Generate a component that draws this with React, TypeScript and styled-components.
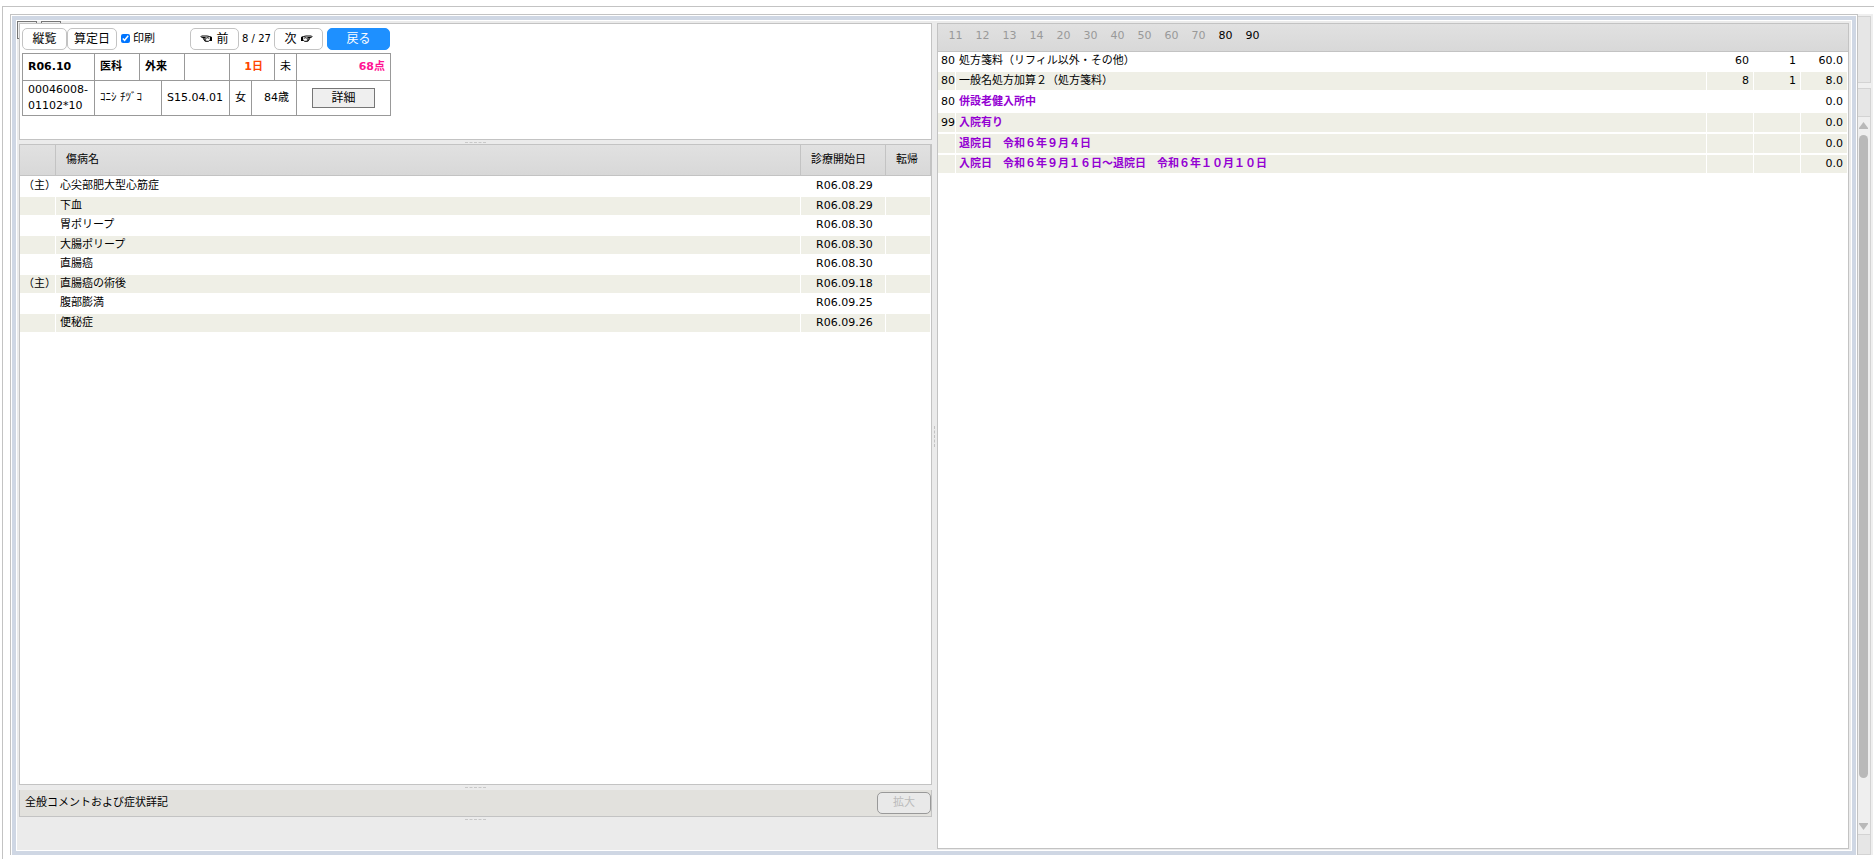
import React from 'react';
import styled, { createGlobalStyle } from 'styled-components';

const Global = createGlobalStyle`
  *, *::before, *::after { box-sizing: border-box; }
  html, body, #root { height: 100%; }
  body {
    margin: 0;
    background: #fff;
    color: #000;
    font: 11px/16px "DejaVu Sans", "Noto Sans CJK JP", sans-serif;
  }
  button, input { font: inherit; color: inherit; margin: 0; }
  table { border-collapse: separate; border-spacing: 0; }
`;

const line = '#c3c3c3';
const stripe = '#efefe6';
const barFill = 'linear-gradient(#e1e1e1, #d8d8d8)';

const Page = styled.div`
  height: 100%;
  padding-top: 6px;
  padding-left: 2px;
`;

const Frame = styled.div`
  display: flex;
  height: 100%;
  padding: 7px 1px 4px 7px;
  border-top: 1px solid ${line};
  border-left: 1px solid ${line};
`;

const Dialog = styled.main`
  flex: 1;
  min-width: 0;
  display: flex;
  padding: 1px 1px 0 1px;
  border: 1px solid ${line};
  border-bottom: 0;
`;

const DialogBody = styled.div`
  position: relative;
  flex: 1;
  min-width: 0;
  display: flex;
  padding: 3px 3px 2px;
  border: 4px solid #cfd7e4;
  background: #ebebeb;
  box-shadow: inset 0 0 0 1px #fff;
`;

/* Edges of the tabs that peek out from behind the patient panel */
const BackTabs = styled.div`
  position: absolute;
  top: 1px;
  left: 1px;
  display: flex;
  gap: 4px;
`;

const BackTab = styled.span`
  width: 20px;
  height: 18px;
  border: 1px solid #767676;
  background: #efefef;
`;

const Left = styled.div`
  flex: 913 1 0;
  min-width: 0;
  display: flex;
  flex-direction: column;
  position: relative;
`;

const Panel = styled.section`
  background: #fff;
  border: 1px solid ${line};
`;

const TopPanel = styled(Panel)`
  flex: none;
  height: 117px;
  padding: 2px;
`;

const Grip = styled.div<{ $h: number }>`
  flex: none;
  height: ${p => p.$h}px;
  display: flex;
  justify-content: center;
  align-items: center;
  &::before {
    content: '';
    width: 21px;
    border-top: 1px dashed #c8c8c8;
  }
`;

const Splitter = styled.div`
  flex: none;
  width: 5px;
  display: flex;
  align-items: center;
  justify-content: center;
  &::before {
    content: '';
    height: 21px;
    border-left: 1px dashed #c3c3c3;
  }
`;

const Toolbar = styled.div`
  display: flex;
  align-items: center;
  height: 25px;
`;

const ToolButton = styled.button<{ $w: number }>`
  display: flex;
  align-items: center;
  justify-content: center;
  gap: 4px;
  width: ${p => p.$w}px;
  height: 22px;
  padding: 0;
  border: 1px solid ${line};
  border-radius: 5px;
  background: #fff;
  font-size: 12px;
  line-height: 18px;
`;

const BackButton = styled(ToolButton)`
  margin-left: 4px;
  border-color: #1e90ff;
  background: #1e90ff;
  color: #fff;
`;

const PrintLabel = styled.label`
  display: flex;
  align-items: center;
  gap: 3px;
  width: 73px;
  padding-left: 4px;
  input { width: 9px; height: 9px; }
`;

const Pager = styled.span`
  width: 35px;
  text-align: center;
  font-size: 10px;
`;

const Summary = styled.table`
  width: 369px;
  margin-top: 2px;
  table-layout: fixed;
  border-collapse: collapse;
`;

const SumCell = styled.td<{ $h?: number; $right?: number; $color?: string; $bold?: boolean }>`
  height: ${p => (p.$h ? p.$h + 'px' : 'auto')};
  padding: 0 ${p => p.$right ?? 0}px 0 5px;
  border: 1px solid #999;
  white-space: nowrap;
  text-align: ${p => (p.$right ? 'right' : 'left')};
  color: ${p => p.$color || '#000'};
  font-weight: ${p => (p.$bold ? 700 : 400)};
`;

const ButtonCell = styled(SumCell)`
  padding: 0;
  text-align: center;
`;

const DetailButton = styled.button`
  width: 63px;
  height: 20px;
  padding: 0;
  border: 1px solid #767676;
  background: #efefef;
  font-size: 12px;
  line-height: 18px;
  vertical-align: middle;
`;

const ListPanel = styled(Panel)`
  flex: 1;
  min-height: 0;
`;

const DataTable = styled.table`
  width: 100%;
  table-layout: fixed;
`;

const HeadCell = styled.th`
  height: 31px;
  padding: 0 0 0 10px;
  text-align: left;
  font-weight: 400;
  white-space: nowrap;
  background: ${barFill};
  border-right: 1px solid ${line};
  border-bottom: 1px solid ${line};
`;

const Cell = styled.td<{ $left?: number; $end?: boolean }>`
  padding: 0 4px 0 ${p => p.$left ?? 0}px;
  text-align: ${p => (p.$end ? 'right' : 'left')};
  white-space: nowrap;
  border-right: 1px solid #fff;
`;

const DiseaseRow = styled.tr<{ $even: boolean }>`
  height: ${p => (p.$even ? 18 : 21)}px;
  background: ${p => (p.$even ? stripe : '#fff')};
  ${Cell} { padding-bottom: ${p => (p.$even ? 0 : 1)}px; }
`;

const CommentBar = styled.section`
  flex: none;
  display: flex;
  align-items: center;
  justify-content: space-between;
  height: 27px;
  padding-left: 5px;
  background: #e2e1dd;
  border: 1px solid ${line};
  border-top: 0;
`;

const ExpandButton = styled.button`
  width: 54px;
  height: 22px;
  padding: 0;
  border: 1px solid #999;
  border-radius: 5px;
  background: #e9e9e9;
  &:disabled { color: #bbb; }
`;

const BottomSpace = styled.div`
  flex: none;
  height: 28px;
`;

const Right = styled(Panel)`
  flex: 910 1 0;
  min-width: 0;
`;

const CodeBar = styled.nav`
  display: flex;
  height: 28px;
  padding: 4px 0 0 4px;
  background: ${barFill};
  border-bottom: 1px solid ${line};
`;

const CodeLink = styled.a<{ $on: boolean }>`
  width: 27px;
  text-align: center;
  text-decoration: none;
  color: ${p => (p.$on ? '#000' : '#999')};
`;

const ActRow = styled.tr<{ $h: number; $fill: boolean }>`
  height: ${p => p.$h}px;
  ${Cell} {
    background: ${p => (p.$fill ? stripe : '#fff')};
    border-bottom: 2px solid #fff;
  }
`;

const ActName = styled(Cell)<{ $note: boolean }>`
  color: ${p => (p.$note ? '#9400d3' : '#000')};
  font-weight: ${p => (p.$note ? 700 : 400)};
`;

const BackStrip = styled.aside`
  flex: none;
  width: 15px;
  display: flex;
  flex-direction: column;
  padding: 2px 2px 0 0;
  background: #efefef;
`;

const StripBox = styled.div<{ $h: number }>`
  flex: none;
  height: ${p => p.$h}px;
  border: 1px solid #d3d3d3;
  border-left: 0;
  background: #e6e6e6;
`;

const StripGap = styled.div`
  flex: none;
  height: 5px;
`;

const Scroll = styled.div`
  flex: 1;
  display: flex;
  flex-direction: column;
  align-items: center;
  padding: 5px 1px 4px 0;
  border-right: 1px solid #d3d3d3;
  svg { flex: none; display: block; }
`;

const Thumb = styled.div`
  flex: 643;
  width: 9px;
  margin-top: 6px;
  border-radius: 5px;
  background: #b9b9b9;
`;

const ThumbRest = styled.div`
  flex: 45;
`;

const diseases = [
  ['（主）', '心尖部肥大型心筋症', 'R06.08.29'],
  ['', '下血', 'R06.08.29'],
  ['', '胃ポリープ', 'R06.08.30'],
  ['', '大腸ポリープ', 'R06.08.30'],
  ['', '直腸癌', 'R06.08.30'],
  ['（主）', '直腸癌の術後', 'R06.09.18'],
  ['', '腹部膨満', 'R06.09.25'],
  ['', '便秘症', 'R06.09.26'],
];

const codes = ['11', '12', '13', '14', '20', '30', '40', '50', '60', '70', '80', '90'];

const acts = [
  { code: '80', name: '処方箋料（リフィル以外・その他）', pt: '60', n: '1', sum: '60.0', h: 20, fill: false, note: false },
  { code: '80', name: '一般名処方加算２（処方箋料）', pt: '8', n: '1', sum: '8.0', h: 20, fill: true, note: false },
  { code: '80', name: '併設老健入所中', pt: '', n: '', sum: '0.0', h: 21, fill: false, note: true },
  { code: '99', name: '入院有り', pt: '', n: '', sum: '0.0', h: 21, fill: true, note: true },
  { code: '', name: '退院日　令和６年９月４日', pt: '', n: '', sum: '0.0', h: 21, fill: true, note: true },
  { code: '', name: '入院日　令和６年９月１６日～退院日　令和６年１０月１０日', pt: '', n: '', sum: '0.0', h: 20, fill: true, note: true },
];

function Hand({ left }: { left?: boolean }) {
  return (
    <svg width="12" height="8" viewBox="0 0 12 8" aria-hidden="true">
      <g transform={left ? 'translate(12 0) scale(-1 1)' : undefined} fill="none" stroke="#000">
        <path d="M0 2.500 2.500 1.500 5 1h5.500q1 .7 0 1.300L6.500 2.700M6.500 2.700h1.700q1 .6 0 1.300H6M7.800 4q.8.600 0 1.200H5.800M7.200 5.200q.6.800-.4 1.100H3.600L2.500 5.500H0" strokeWidth="1" />
        <path d="M3 3.200 5 2.600 6 3.500" strokeWidth=".9" />
        <path d="M0 2.500v3h2.200v-4Z" fill="#000" stroke="none" />
      </g>
    </svg>
  );
}

export default function App() {
  return (
    <Page>
      <Global />
      <Frame>
        <Dialog>
          <DialogBody>
            <BackTabs aria-hidden="true"><BackTab /><BackTab /></BackTabs>
            <Left>
              <TopPanel>
                <Toolbar>
                  <ToolButton $w={45}>縦覧</ToolButton>
                  <ToolButton $w={50}>算定日</ToolButton>
                  <PrintLabel><input type="checkbox" defaultChecked />印刷</PrintLabel>
                  <ToolButton $w={49}><Hand left />前</ToolButton>
                  <Pager>8 / 27</Pager>
                  <ToolButton $w={49}>次<Hand /></ToolButton>
                  <BackButton $w={63}>戻る</BackButton>
                </Toolbar>
                <Summary>
                  <colgroup>
                    <col width="72" /><col width="45" /><col width="22" /><col width="23" />
                    <col width="45" /><col width="22" /><col width="23" /><col width="22" /><col width="94" />
                  </colgroup>
                  <tbody>
                    <tr>
                      <SumCell $bold $h={27}>R06.10</SumCell>
                      <SumCell $bold>医科</SumCell>
                      <SumCell $bold colSpan={2}>外来</SumCell>
                      <SumCell />
                      <SumCell $bold $right={11} $color="#ff4500" colSpan={2}>1日</SumCell>
                      <SumCell>未</SumCell>
                      <SumCell $bold $right={5} $color="#ff1493">68点</SumCell>
                    </tr>
                    <tr>
                      <SumCell $h={35}>00046008-<br />01102*10</SumCell>
                      <SumCell colSpan={2}>ｺﾆｼ ﾁﾂﾞｺ</SumCell>
                      <SumCell colSpan={2}>S15.04.01</SumCell>
                      <SumCell>女</SumCell>
                      <SumCell $right={7} colSpan={2}>84歳</SumCell>
                      <ButtonCell><DetailButton>詳細</DetailButton></ButtonCell>
                    </tr>
                  </tbody>
                </Summary>
              </TopPanel>
              <Grip $h={4} />
              <ListPanel>
                <DataTable>
                  <colgroup><col width="36" /><col /><col width="85" /><col width="45" /></colgroup>
                  <thead>
                    <tr>
                      <HeadCell />
                      <HeadCell>傷病名</HeadCell>
                      <HeadCell>診療開始日</HeadCell>
                      <HeadCell>転帰</HeadCell>
                    </tr>
                  </thead>
                  <tbody>
                    {diseases.map(([main, name, date], i) => (
                      <DiseaseRow key={name} $even={i % 2 === 1}>
                        <Cell $left={3}>{main}</Cell>
                        <Cell $left={4}>{name}</Cell>
                        <Cell $left={15}>{date}</Cell>
                        <Cell />
                      </DiseaseRow>
                    ))}
                  </tbody>
                </DataTable>
              </ListPanel>
              <Grip $h={5} />
              <CommentBar>
                全般コメントおよび症状詳記
                <ExpandButton disabled>拡大</ExpandButton>
              </CommentBar>
              <Grip $h={4} />
              <BottomSpace />
            </Left>
            <Splitter />
            <Right>
              <CodeBar>
                {codes.map(c => (
                  <CodeLink key={c} href={`#c${c}`} $on={c === '80' || c === '90'}>{c}</CodeLink>
                ))}
              </CodeBar>
              <DataTable>
                <colgroup><col width="18" /><col /><col width="47" /><col width="47" /><col width="47" /></colgroup>
                <tbody>
                  {acts.map(a => (
                    <ActRow key={a.name} $h={a.h} $fill={a.fill}>
                      <Cell $left={3}>{a.code}</Cell>
                      <ActName $left={3} $note={a.note}>{a.name}</ActName>
                      <Cell $end>{a.pt}</Cell>
                      <Cell $end>{a.n}</Cell>
                      <Cell $end>{a.sum}</Cell>
                    </ActRow>
                  ))}
                </tbody>
              </DataTable>
            </Right>
          </DialogBody>
        </Dialog>
        <BackStrip aria-hidden="true">
          <StripBox $h={67} />
          <StripGap />
          <StripBox $h={29} />
          <Scroll>
            <svg width="9" height="7" viewBox="0 0 9 7"><path d="M4.500 0 9 6v1H0V6Z" fill="#b9b9b9" /></svg>
            <Thumb />
            <ThumbRest />
            <svg width="9" height="7" viewBox="0 0 9 7"><path d="M4.500 7 0 1V0h9v1Z" fill="#b9b9b9" /></svg>
          </Scroll>
          <StripBox $h={21} />
        </BackStrip>
      </Frame>
    </Page>
  );
}
